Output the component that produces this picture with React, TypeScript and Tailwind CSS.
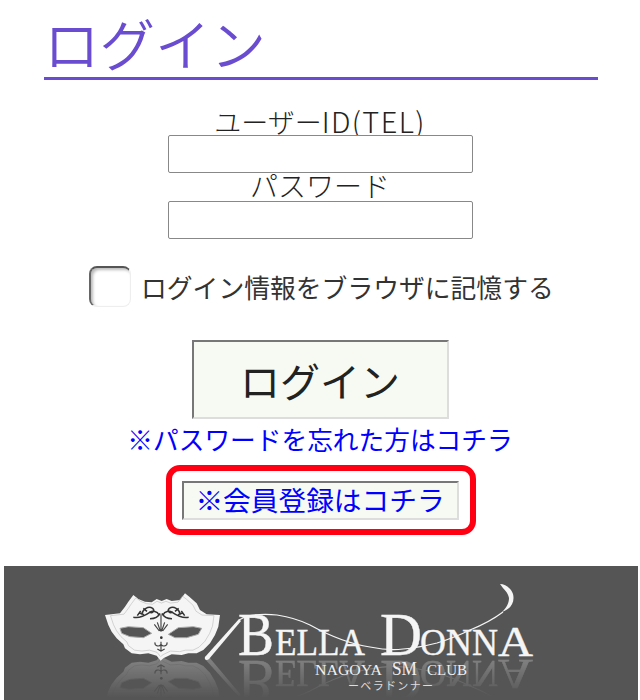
import React from 'react'

const jp = 'font-["Noto_Sans_CJK_JP","Liberation_Sans",sans-serif]'

// mask outline, traced at 3x from origin (100,585)
const MaskOutline =
  'M15 90 L60 85 L75 65 L85 50 L100 30 L115 42 L135 50 L155 52 L170 42 L185 48 L200 42 L215 48 L240 45 L255 25 L268 35 L290 55 L300 75 L320 88 L360 90 L355 125 L345 150 L330 175 L310 195 L290 205 L265 205 L245 210 L215 208 L190 220 L182 227 L170 212 L145 205 L120 208 L95 205 L75 190 L70 178 L50 160 L35 140 L25 120 Z'
const EyeLeft = 'M60 130 L85 125 L130 128 L155 145 L130 158 L90 155 L65 145 Z'
const EyeRight = 'M205 148 L235 128 L280 125 L305 130 L295 148 L260 158 L225 158 Z'

const Wing: React.FC = () => (
  <g fill="none" stroke="#333" strokeWidth="4.5">
    <path d="M100 97 C120 101 135 92 148 83 C158 76 172 78 177 90" />
    <path d="M125 88 C128 72 145 62 158 70 C166 78 156 88 148 80" />
    <path d="M150 101 C165 101 175 96 180 85" />
    <path d="M130 70 L141 79 M118 84 L132 89 M112 92 L122 78" />
  </g>
)

const LogoMark: React.FC = () => (
  <g id="logoMark">
    <g transform="translate(100 585) scale(0.3333)">
      <path d={`${MaskOutline} ${EyeLeft} ${EyeRight}`} fill="#f5f5f5" fillRule="evenodd" />
      <path d={MaskOutline} fill="none" stroke="#bbb" strokeWidth="2" transform="translate(18 11) scale(0.9)" />
      <path d={EyeLeft} fill="none" stroke="#aaa" strokeWidth="3" />
      <path d={EyeRight} fill="none" stroke="#aaa" strokeWidth="3" />
      <Wing />
      <g transform="translate(366 0) scale(-1 1)">
        <Wing />
      </g>
      <g fill="none" stroke="#444" strokeWidth="3.5">
        <path d="M183 88 V140 M163 118 L178 138 M172 112 L181 138 M203 118 L188 138 M194 112 L185 138" />
        <path d="M165 172 C163 184 178 186 183 178 C188 186 203 184 201 172 M183 170 V198 M172 192 L183 198 L194 192" />
      </g>
      <circle cx="184" cy="158" r="4" fill="#333" />
    </g>
    <path d="M205 657 C204 660 207 661 209 659 L241 621 L239 619 Z" fill="#f5f5f5" />
    <path
      fill="none"
      stroke="#f5f5f5"
      strokeWidth="1.2"
      d="M239 620 L247 616 C258 614 268 614 277 615 C290 617 300 620 310 625 C330 636 350 644 370 647 C385 650 395 650 403 649 C415 648 425 646 437 643 C450 639 460 635 470 630 C485 624 495 618 503 612"
    />
    <path fill="#f5f5f5" d="M502 612 C507 607 509 603 509 598 C508 592 504 590 500 584 C505 584 511 588 513 594 C515 602 511 609 502 612 Z" />
    <g fontFamily='"Liberation Serif", serif' fill="#f5f5f5" stroke="#f5f5f5" strokeWidth="0.4">
      <text x="238" y="655" fontSize="62" textLength="36" lengthAdjust="spacingAndGlyphs">B</text>
      <text x="275" y="655" fontSize="38" textLength="90" lengthAdjust="spacingAndGlyphs">ELLA</text>
      <text x="380" y="655" fontSize="61" textLength="42" lengthAdjust="spacingAndGlyphs">D</text>
      <text x="420" y="655" fontSize="38" textLength="78" lengthAdjust="spacingAndGlyphs">ONN</text>
      <text x="498" y="656" fontSize="42" textLength="35" lengthAdjust="spacingAndGlyphs">A</text>
    </g>
  </g>
)

const BellaDonnaLogo: React.FC = () => (
  <svg width="440" height="134" viewBox="100 566 440 134" className="block">
    <defs>
      <linearGradient id="fade" x1="0" y1="656" x2="0" y2="698" gradientUnits="userSpaceOnUse">
        <stop offset="0" stopColor="#fff" stopOpacity="0.3" />
        <stop offset="1" stopColor="#fff" stopOpacity="0" />
      </linearGradient>
      <mask id="fadeMask" maskUnits="userSpaceOnUse" x="100" y="656" width="440" height="44">
        <rect x="100" y="656" width="440" height="44" fill="url(#fade)" />
      </mask>
    </defs>
    <LogoMark />
    <g mask="url(#fadeMask)">
      <use href="#logoMark" transform="matrix(1 0 0 -1 0 1316)" />
    </g>
    <g fontFamily='"Liberation Serif", serif' fill="#f0f0f0">
      <text x="315" y="675" fontSize="14" textLength="67" lengthAdjust="spacingAndGlyphs">NAGOYA</text>
      <text x="392" y="675" fontSize="18" textLength="25" lengthAdjust="spacingAndGlyphs">SM</text>
      <text x="427" y="675" fontSize="14" textLength="40" lengthAdjust="spacingAndGlyphs">CLUB</text>
    </g>
    <text x="348" y="690" fontSize="11" textLength="85" fill="#ddd" fontFamily='"Noto Sans CJK JP", sans-serif'>ーベラドンナー</text>
  </svg>
)

export default function App() {
  return (
    <div className={`w-[640px] h-[700px] overflow-hidden bg-white ${jp}`}>
      <h1 className="ml-[44px] h-[80px] w-[554px] border-b-[3px] border-[#6a4cd0] pt-[6px] text-[55.5px] leading-[72px] font-[350] text-[#6a4cd0]">
        ログイン
      </h1>

      <div className="mt-[25px] flex flex-col items-center">
        <label className="h-[30px] text-[27px] leading-[30px] font-light text-[#222]">
          ユーザー<span className="text-[29px] tracking-[1.4px]">ID(TEL)</span>
        </label>
        <input className="block h-[38px] w-[305px] rounded-[2px] border border-[#888] bg-white" />
        <label className="h-[28px] text-[28px] leading-[24px] font-light text-[#222]">パスワード</label>
        <input className="block h-[38px] w-[305px] rounded-[2px] border border-[#888] bg-white" />
      </div>

      <div className="mt-[27px] ml-[89px] flex items-center">
        <span className="h-[41px] w-[42px] rounded-[8px] border-t-2 border-l-2 border-r border-b border-t-[#555] border-l-[#666] border-r-[#eee] border-b-[#eee] bg-white shadow-[inset_2px_2px_3px_#bbb]" />
        <span className="ml-[10px] text-[25.8px] leading-[41px] text-[#333]">ログイン情報をブラウザに記憶する</span>
      </div>

      <div className="mt-[33px] flex flex-col items-center">
        <button className="h-[79px] w-[257px] border-2 border-t-[#777] border-l-[#777] border-r-[#ddd] border-b-[#ddd] bg-[#f7faf2] text-[40px] leading-none text-[#222]">
          ログイン
        </button>
        <a className="mt-[5px] h-[41px] text-[25.7px] leading-[30px] text-[#0000ff]">※パスワードを忘れた方はコチラ</a>
        <div className="ml-[2px] flex h-[70px] w-[310px] items-center justify-center rounded-[14px] border-[6px] border-[#ff0012] bg-white pr-[2px]">
          <button className="h-[39px] w-[277px] border-2 border-t-[#777] border-l-[#777] border-r-[#ddd] border-b-[#ddd] bg-[#f7faf2] text-[27.7px] leading-none text-[#0000ff]">
            ※会員登録はコチラ
          </button>
        </div>
      </div>

      <div className="mt-[31px] ml-[4px] flex h-[134px] w-[634px] justify-start bg-[#555555] pl-[96px]">
        <BellaDonnaLogo />
      </div>
    </div>
  )
}
